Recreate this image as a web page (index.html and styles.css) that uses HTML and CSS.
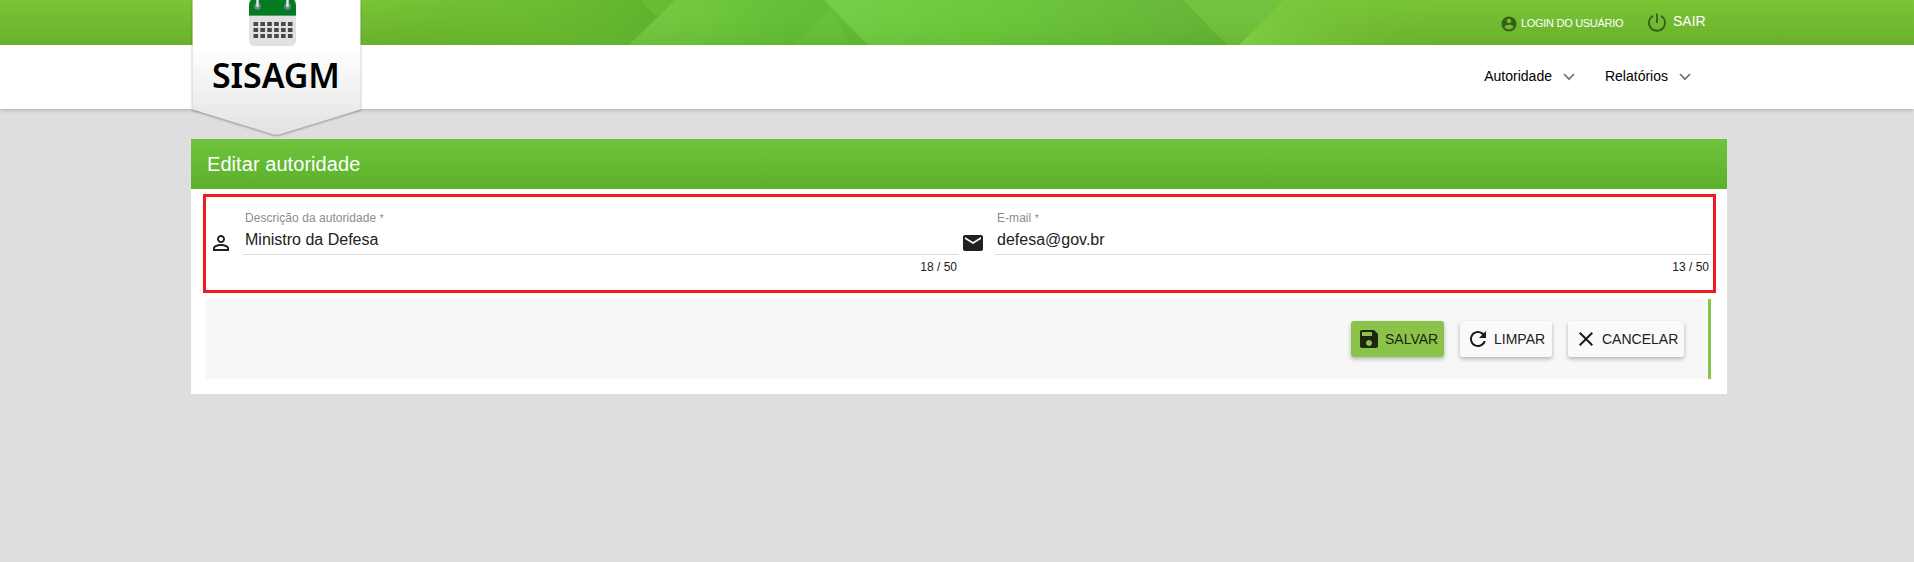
FILE: index.html
```html
<!DOCTYPE html>
<html lang="pt-BR">
<head>
<meta charset="utf-8">
<title>SISAGM - Editar autoridade</title>
<link rel="stylesheet" href="styles.css">
</head>
<body>
<header class="site-header">
  <div class="topbar">
    <svg class="facets" width="1914" height="45" viewBox="0 0 1914 45" aria-hidden="true">
      <defs>
        <linearGradient id="g1"><stop offset="0" stop-color="#59b02d" stop-opacity="0"/><stop offset=".55" stop-color="#62b82f" stop-opacity=".5"/><stop offset="1" stop-color="#5bb02d"/></linearGradient>
        <linearGradient id="g2"><stop offset="0" stop-color="#73c73e"/><stop offset=".3" stop-color="#6cc539"/><stop offset=".7" stop-color="#60bd32"/><stop offset="1" stop-color="#62b932"/></linearGradient>
        <linearGradient id="g3"><stop offset="0" stop-color="#72ce43"/><stop offset=".4" stop-color="#69c738"/><stop offset="1" stop-color="#62b232"/></linearGradient>
        <linearGradient id="g4"><stop offset="0" stop-color="#7dcd42"/><stop offset="1" stop-color="#73bd31" stop-opacity="0"/></linearGradient>
        <linearGradient id="sh" x2="0" y2="1"><stop offset="0" stop-color="#fff" stop-opacity=".03"/><stop offset="1" stop-color="#286400" stop-opacity=".08"/></linearGradient>
      </defs>
      <path d="M361 0H675L629 45H361Z" fill="url(#g1)"/>
      <path d="M641 0H675L656 17Z" fill="#68bb33"/>
      <path d="M675 0H870V45H629Z" fill="url(#g2)"/>
      <path d="M831 8L849 45H794Z" fill="#66c037"/>
      <path d="M824 0H1200L1227 45H868Z" fill="url(#g3)"/>
      <path d="M1183 0H1284L1239 45H1227Z" fill="#6fc03a"/>
      <path d="M675 0H1284L1239 45H629Z" fill="url(#sh)"/>
      <path d="M1284 0H1440V45H1239Z" fill="url(#g4)"/>
    </svg>
    <div class="wrap user-links">
      <a class="login"><svg width="18" height="18" viewBox="0 0 24 24"><path d="M12 2C6.480 2 2 6.480 2 12s4.480 10 10 10 10-4.480 10-10S17.520 2 12 2zm0 3c1.660 0 3 1.340 3 3s-1.340 3-3 3-3-1.340-3-3 1.340-3 3-3zm0 14.200c-2.500 0-4.710-1.280-6-3.220.03-1.990 4-3.080 6-3.080 1.990 0 5.970 1.090 6 3.080-1.290 1.940-3.500 3.220-6 3.220z"/></svg><span>LOGIN DO USUÁRIO</span></a>
      <a class="logout"><svg width="18" height="19" viewBox="0 0 18 19"><path d="M9 .5V10M5.200 2.700A8 8 0 1 0 12.800 2.700" fill="none" stroke="#35601a" stroke-width="1.800"/></svg><span>SAIR</span></a>
    </div>
  </div>
  <nav class="navbar">
    <div class="wrap menu">
      <a>Autoridade<svg width="12" height="8" viewBox="0 0 12 8"><path d="M1 1l5 5.200L11 1"/></svg></a>
      <a>Relatórios<svg width="12" height="8" viewBox="0 0 12 8"><path d="M1 1l5 5.200L11 1"/></svg></a>
    </div>
  </nav>
  <div class="brand">
    <svg class="ribbon" width="176" height="142" viewBox="0 0 176 142" aria-hidden="true">
      <defs><linearGradient id="tag" x2="0" y2="1"><stop offset=".35" stop-color="#fff"/><stop offset="1" stop-color="#e2e2e2"/></linearGradient></defs>
      <path class="tag" d="M4.500 0H172.500V109.500L94.500 133.500Q88.500 136 82.500 133.500L4.500 109.500Z" fill="url(#tag)"/>
      <path d="M61 0H108V40Q108 46 102 46H67Q61 46 61 40Z" fill="#e1e1e1"/>
      <path d="M63 0H106Q108 2 108 5V15H61V5Q61 2 63 0Z" fill="#047a23"/>
      <path d="M61 15.500H108" stroke="#5c9d6c"/>
      <g fill="#6c8794"><circle cx="69.500" cy="6.500" r="3.300"/><circle cx="99.500" cy="6.500" r="3.300"/></g>
      <path d="M69.500 0V6M99.500 0V6" stroke="#dde5e8" stroke-width="2.500" stroke-linecap="round"/>
      <path d="M65.500 24H105M65.500 30H105M65.500 36H105" stroke="#484848" stroke-width="4" stroke-dasharray="4.600 2.280"/>
    </svg>
    <strong>SISAGM</strong>
  </div>
</header>
<main class="card">
  <h1>Editar autoridade</h1>
  <form>
    <div class="fields">
      <div class="field">
        <svg width="24" height="24" viewBox="0 0 24 24"><path d="M12 5.900c1.160 0 2.100.94 2.100 2.100s-.94 2.100-2.100 2.100S9.900 9.160 9.900 8s.94-2.100 2.100-2.100m0 9c2.970 0 6.100 1.460 6.100 2.100v1.100H5.900V17c0-.64 3.130-2.100 6.100-2.100M12 4C9.790 4 8 5.790 8 8s1.790 4 4 4 4-1.790 4-4-1.790-4-4-4zm0 9c-2.670 0-8 1.340-8 4v3h16v-3c0-2.660-5.330-4-8-4z"/></svg>
        <label><span class="caption">Descrição da autoridade <i>*</i></span><span class="value">Ministro da Defesa</span><span class="count">18 / 50</span></label>
      </div>
      <div class="field">
        <svg width="24" height="24" viewBox="0 0 24 24"><path d="M20 4H4c-1.100 0-1.990.9-1.990 2L2 18c0 1.100.9 2 2 2h16c1.100 0 2-.9 2-2V6c0-1.100-.9-2-2-2zm0 4l-8 5-8-5V6l8 5 8-5v2z"/></svg>
        <label><span class="caption">E-mail <i>*</i></span><span class="value">defesa@gov.br</span><span class="count">13 / 50</span></label>
      </div>
    </div>
    <div class="actions">
      <button type="button" class="btn save"><svg width="24" height="24" viewBox="0 0 24 24"><path d="M17 3H5c-1.110 0-2 .9-2 2v14c0 1.100.89 2 2 2h14c1.100 0 2-.9 2-2V7l-4-4zm-5 16c-1.660 0-3-1.340-3-3s1.340-3 3-3 3 1.340 3 3-1.340 3-3 3zm3-10H5V5h10v4z"/></svg>SALVAR</button>
      <button type="button" class="btn reset"><svg width="24" height="24" viewBox="0 0 24 24"><path d="M17.650 6.350C16.200 4.900 14.210 4 12 4c-4.420 0-7.990 3.580-7.990 8s3.570 8 7.990 8c3.730 0 6.840-2.550 7.730-6h-2.080c-.82 2.330-3.040 4-5.650 4-3.310 0-6-2.690-6-6s2.690-6 6-6c1.660 0 3.140.69 4.220 1.780L13 11h7V4l-2.350 2.350z"/></svg>LIMPAR</button>
      <button type="button" class="btn cancel"><svg width="24" height="24" viewBox="0 0 24 24"><path d="M19 6.410L17.590 5 12 10.590 6.410 5 5 6.410 10.590 12 5 17.590 6.410 19 12 13.410 17.590 19 19 17.590 13.410 12z"/></svg>CANCELAR</button>
    </div>
  </form>
</main>
</body>
</html>
```
FILE: styles.css
```css
* { box-sizing: border-box; }
body {
  margin: 0;
  background: #dedede;
  color: #212121;
  font-family: "Liberation Sans", Arial, sans-serif;
  overflow: hidden;
}
svg { display: block; flex: none; }
.site-header { position: relative; height: 139px; }
.wrap { width: 1536px; margin-left: 191px; display: flex; justify-content: flex-end; }
.topbar { position: relative; height: 45px; background: linear-gradient(#7ac536, #6bb02c); }
.facets { position: absolute; top: 0; left: 0; }
.user-links { position: relative; height: 45px; padding-right: 22px; gap: 22px; color: #fff; }
.login, .logout { display: flex; align-items: flex-start; }
.login svg { margin: 15px 3px 0 0; fill: #35601a; }
.login span { font-size: 11px; line-height: 13px; margin-top: 17px; width: 105px; white-space: nowrap; letter-spacing: -.3px; }
.logout svg { margin: 13px 7px 0 0; }
.logout span { font-size: 14px; line-height: 16px; margin-top: 13px; width: 32px; }
.navbar { height: 64px; background: #fff; box-shadow: 0 1px 4px rgba(0,0,0,.22); }
.menu { padding: 23px 36px 0 0; gap: 30px; font-size: 14px; line-height: 16px; color: #000; }
.menu a { display: flex; }
.menu svg { margin: 5px 0 0 11px; fill: none; stroke: #757575; stroke-width: 1.8; }
.brand { position: absolute; top: 0; left: 188px; width: 176px; height: 142px; }
.ribbon { position: absolute; top: 0; left: 0; }
.tag { filter: drop-shadow(0 1px 1px rgba(0,0,0,.35)); }
.brand strong {
  position: absolute; top: 55px; left: 24px;
  font: 600 34px/40px "Noto Sans", sans-serif;
  letter-spacing: -.1px;
  color: #000;
}
.card { width: 1536px; height: 255px; margin-left: 191px; background: #fff; }
.card h1 {
  margin: 0; height: 50px; padding-left: 16px;
  background: linear-gradient(#6ec43b, #5cb02c);
  color: #fff; font-size: 20px; font-weight: 400; line-height: 50px;
  letter-spacing: .06px;
}
.card form { padding: 5px 11px 0 12px; }
.fields { height: 99px; border: 3px solid #ed1c24; padding: 12px 1px 0 3px; display: flex; }
.field { width: 752px; flex: none; display: flex; }
.field > svg { margin: 22px 10px 0 0; fill: #212121; }
.field label { width: 716px; display: flex; flex-direction: column; }
.caption { font-size: 12px; line-height: 14px; height: 16px; color: #8c8c8c; padding: 2px 0 0 2px; letter-spacing: .05px; }
.caption i { font-style: normal; font-size: 10px; }
.value { font-size: 16px; line-height: 20px; height: 30px; padding: 5px 0 0 2px; border-bottom: 1px solid #dcdcdc; }
.count { align-self: flex-end; padding: 5px 2px 0 0; font-size: 12px; line-height: 14px; }
.actions {
  margin: 6px 5px 0 3px; height: 80px; padding: 22px 24px 0 0;
  display: flex; justify-content: flex-end; gap: 16px;
  background: #f7f7f7; border-right: 3px solid #8bc34a;
}
.btn {
  height: 36px; padding: 0 0 0 6px; border: 0; border-radius: 3px;
  display: flex; align-items: center; gap: 4px;
  background: #fafafa; color: #212121; font: 14px "Liberation Sans", Arial, sans-serif;
  box-shadow: 0 2px 4px rgba(0,0,0,.28);
}
.btn svg { fill: #1c1c1c; }
.save { width: 93px; background: #8bc34a; color: #1b2710; }
.save svg { fill: #1b2710; }
.reset { width: 92px; }
.cancel { width: 116px; }
```
